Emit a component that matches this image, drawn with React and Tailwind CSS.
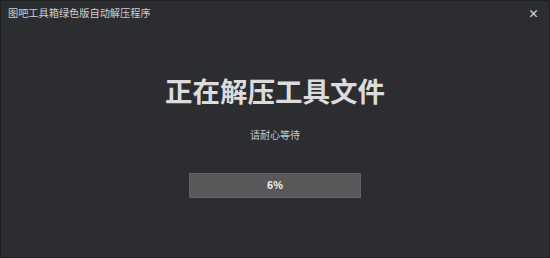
export default function App() {
  return (
    <div
      className="w-[550px] h-[258px] bg-[#2c2d30] border border-[#1f2022] flex flex-col text-[#d6d6d6]"
      style={{ fontFamily: '"Noto Sans CJK SC", "Noto Sans", sans-serif' }}
    >
      <div className="h-[25px] flex items-center justify-between pl-[7px] pr-[10px]">
        <span className="text-[10.2px] leading-none text-[#cfcfcf]">图吧工具箱绿色版自动解压程序</span>
        <span className="text-[11px] leading-none text-[#d8d8d8] font-bold">×</span>
      </div>
      <main className="flex flex-col items-center pt-[49px]">
        <h1 className="text-[27.5px] leading-[30px] font-bold text-[#dcdcdc]">正在解压工具文件</h1>
        <p className="mt-[25px] text-[10px] leading-[10px] text-[#c8c8c8]">请耐心等待</p>
        <div className="mt-[33px] w-[172px] h-[25px] bg-[#58585a] border border-[#626264] flex items-center justify-center">
          <span
            className="text-[11px] font-bold text-[#ececec]"
            style={{ fontFamily: '"Liberation Sans", Arial, sans-serif' }}
          >
            6%
          </span>
        </div>
      </main>
    </div>
  )
}
